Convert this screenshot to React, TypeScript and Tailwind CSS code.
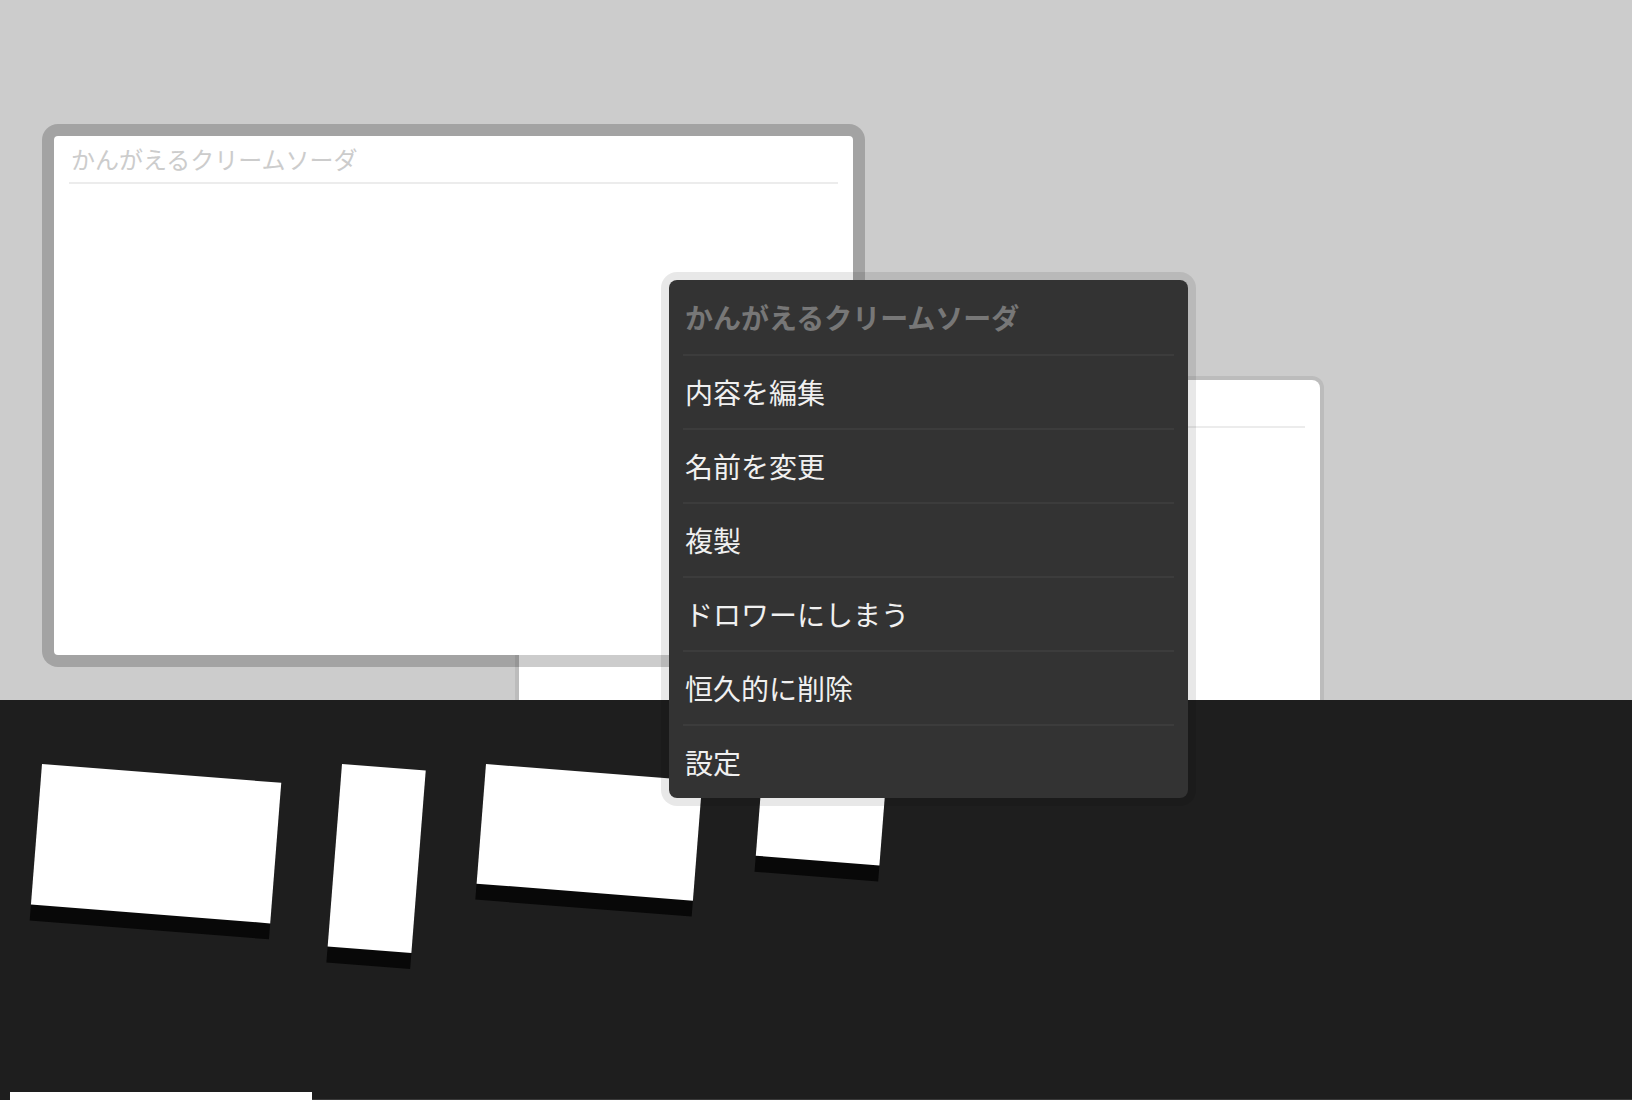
import { ReactNode } from "react";

const FONT = "font-['Noto_Sans_CJK_JP','Noto_Sans',sans-serif]";

const MENU_ITEMS: string[] = ["内容を編集", "名前を変更", "複製", "ドロワーにしまう", "恒久的に削除", "設定"];

interface IDrawerItem {
    width: string;
    height: string;
}

const DRAWER_ITEMS: IDrawerItem[] = [
    { width: "w-[240px]", height: "h-[141px]" },
    { width: "w-[84px]", height: "h-[183px]" },
    { width: "w-[217px]", height: "h-[120px]" },
    { width: "w-[124px]", height: "h-[92px]" },
];

function CardHeader(props: { title?: string }): ReactNode {
    return (
        <div className="mx-[15px] pt-[7px] pb-[7px] border-b-2 border-[#ececec]">
            <div className="h-[32px] px-[2px] text-[24px] leading-[32px] text-[#cccccc] whitespace-nowrap">
                {props.title}
            </div>
        </div>
    );
}

function ContextMenu(): ReactNode {
    return (
        <div className="absolute left-[661px] top-[272px] z-10 w-[535px] rounded-[16px] border-8 border-black/[0.09] bg-[#333333] bg-clip-padding">
            <div className="flex h-[74px] items-center px-[16px] text-[28px] font-bold text-[#777777]">
                かんがえるクリームソーダ
            </div>
            {MENU_ITEMS.map((label) => (
                <div key={label}>
                    <div className="mx-[14px] h-[2px] bg-[#3c3c3c]" />
                    <div className="flex h-[72px] items-center px-[16px] text-[28px] text-[#f0f0f0]">
                        {label}
                    </div>
                </div>
            ))}
        </div>
    );
}

export default function App(): ReactNode {
    return (
        <div className={`relative flex h-[1100px] w-full flex-col overflow-hidden ${FONT}`}>
            {/* canvas with the note windows */}
            <div className="relative h-[700px] shrink-0 overflow-hidden bg-[#cccccc]">
                {/* back window, its title is covered by the front one */}
                <div className="absolute left-[515px] top-[376px] h-[420px] w-[809px] rounded-[12px] border-4 border-black/[0.08] bg-white bg-clip-padding">
                    <CardHeader />
                </div>

                <div className="absolute left-[42px] top-[124px] h-[543px] w-[823px] rounded-[16px] border-[12px] border-black/20 bg-white bg-clip-padding">
                    <CardHeader title="かんがえるクリームソーダ" />
                </div>
            </div>

            {/* drawer */}
            <div className="flex flex-1 flex-col bg-[#1e1e1e]">
                <div className="flex items-start gap-[60px] pl-[42px] pt-[64px]">
                    {DRAWER_ITEMS.map((item, i) => (
                        <div
                            key={i}
                            className={`${item.width} ${item.height} origin-top-left rotate-[4.5deg] bg-white shadow-[0_16px_0_#080808]`}
                        />
                    ))}
                </div>

                <div className="mt-auto flex h-[8px] items-end">
                    <div className="ml-[10px] h-[8px] w-[302px] bg-white" />
                    <div className="h-[1px] flex-1 bg-[#3a3a3a]" />
                </div>
            </div>

            <ContextMenu />
        </div>
    );
}
